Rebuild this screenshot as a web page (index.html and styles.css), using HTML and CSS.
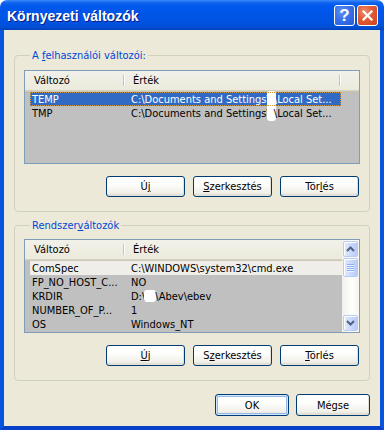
FILE: index.html
```html
<!DOCTYPE html>
<html lang="hu">
<head>
<meta charset="utf-8">
<title>Környezeti változók</title>
<link rel="stylesheet" href="styles.css">
</head>
<body>
<div class="window">
  <div class="titlebar">
    <span class="title">Környezeti változók</span>
    <div class="caption-btns">
      <span class="cbtn help">?</span>
      <span class="cbtn close"><svg width="11" height="11" viewBox="0 0 11 11"><path d="M1.5 1.5 L9.5 9.5 M9.5 1.5 L1.5 9.5" stroke="#fff" stroke-width="2.2" stroke-linecap="square"/></svg></span>
    </div>
  </div>
  <div class="frame">
    <div class="client">
      <fieldset class="group">
        <legend>A <u>f</u>elhasználói változói:</legend>
        <div class="list">
          <div class="header">
            <span class="hcol c1">Változó</span>
            <span class="hcol c2">Érték</span>
            <span class="hcol c3"></span>
          </div>
          <div class="rows">
            <div class="row sel"><span class="cell c1">TEMP</span><span class="cell c2">C:\Documents and Settings\<i class="redact"></i>\Local Set...</span></div>
            <div class="row"><span class="cell c1">TMP</span><span class="cell c2">C:\Documents and Settings\<i class="redact"></i>\Local Set...</span></div>
          </div>
        </div>
        <div class="btnrow">
          <button class="btn">Ú<u>j</u></button>
          <button class="btn"><u>S</u>zerkesztés</button>
          <button class="btn">Tör<u>l</u>és</button>
        </div>
      </fieldset>

      <fieldset class="group group2">
        <legend>Rendszer<u>v</u>áltozók</legend>
        <div class="list list-scroll">
          <div class="list-main">
            <div class="header">
              <span class="hcol c1">Változó</span>
              <span class="hcol c2">Érték</span>
            </div>
            <div class="rows">
              <div class="row inact"><span class="cell c1">ComSpec</span><span class="cell c2">C:\WINDOWS\system32\cmd.exe</span></div>
              <div class="row"><span class="cell c1">FP_NO_HOST_C...</span><span class="cell c2">NO</span></div>
              <div class="row"><span class="cell c1">KRDIR</span><span class="cell c2">D:\<i class="redact small"></i>\Abev\ebev</span></div>
              <div class="row"><span class="cell c1">NUMBER_OF_P...</span><span class="cell c2">1</span></div>
              <div class="row"><span class="cell c1">OS</span><span class="cell c2">Windows_NT</span></div>
            </div>
          </div>
          <div class="vscroll">
            <span class="sbtn"><svg width="9" height="6" viewBox="0 0 9 6"><path d="M1 5 L4.5 1.5 L8 5" fill="none" stroke="#4D6185" stroke-width="2"/></svg></span>
            <span class="thumb"><i></i><i></i><i></i><i></i></span>
            <span class="track"></span>
            <span class="sbtn"><svg width="9" height="6" viewBox="0 0 9 6"><path d="M1 1 L4.5 4.5 L8 1" fill="none" stroke="#4D6185" stroke-width="2"/></svg></span>
          </div>
        </div>
        <div class="btnrow">
          <button class="btn"><u>Ú</u>j</button>
          <button class="btn">S<u>z</u>erkesztés</button>
          <button class="btn"><u>T</u>örlés</button>
        </div>
      </fieldset>

      <div class="dlgbtns">
        <button class="btn default">OK</button>
        <button class="btn">Mégse</button>
      </div>
    </div>
  </div>
</div>
</body>
</html>
```

FILE: styles.css
```css
* { box-sizing: border-box; }

html, body {
  margin: 0;
  padding: 0;
  background: #ffffff;
}

body {
  width: 384px;
  height: 430px;
  overflow: hidden;
  font-family: "DejaVu Sans Condensed", "DejaVu Sans", sans-serif;
  font-size: 11px;
  color: #000;
}

.window {
  width: 384px;
  height: 430px;
  display: flex;
  flex-direction: column;
}

.titlebar {
  height: 30px;
  flex: none;
  display: flex;
  align-items: center;
  justify-content: space-between;
  padding: 0 6px 0 7px;
  border-radius: 7px 7px 0 0;
  background: linear-gradient(to bottom,
    #3C8CF8 0px, #2A7BF5 1px, #0F62EC 3px, #0058EE 6px,
    #0055E8 14px, #0053E1 22px, #0050D8 26px, #0047C8 29px, #003DB0 30px);
}

.title {
  font-family: "Liberation Sans", Arial, sans-serif;
  font-weight: bold;
  font-size: 14px;
  color: #fff;
  text-shadow: 1px 1px 0 #0A1883;
  padding-top: 1px;
}

.caption-btns {
  display: flex;
  gap: 2px;
  padding-top: 1px;
}

.cbtn {
  width: 21px;
  height: 21px;
  border: 1px solid #fff;
  border-radius: 3px;
  display: flex;
  align-items: center;
  justify-content: center;
  color: #fff;
}

.help {
  background: radial-gradient(circle at 35% 30%, #5E8FF5 0%, #3A70E8 45%, #2158D8 100%);
  font-family: "Liberation Sans", Arial, sans-serif;
  font-weight: bold;
  font-size: 17px;
  line-height: 1;
}

.close {
  background: radial-gradient(circle at 35% 30%, #EC8E6E 0%, #E05A34 45%, #C9431F 100%);
}

.frame {
  flex: 1;
  display: flex;
  border-left: 4px solid #0855DD;
  border-right: 4px solid #0855DD;
  border-bottom: 4px solid #0841C9;
  box-shadow: inset 1px 0 0 #166AEE, inset -1px 0 0 #166AEE;
}

.client {
  flex: 1;
  background: #ECE9D8;
  padding: 19px 10px 0 10px;
  display: flex;
  flex-direction: column;
}

.group {
  margin: 0;
  padding: 8px 9px 14px 9px;
  border: 1px solid #D0D0BF;
  border-radius: 4px;
  min-width: 0;
}

.group legend {
  color: #0046D5;
  padding: 0 2px;
  margin-left: 6px;
  line-height: 13px;
  height: 13px;
}

.group2 {
  margin-top: 7px;
  padding-top: 7px;
}

u { text-decoration: underline; text-underline-offset: 1px; }

.list {
  height: 94px;
  border: 1px solid #7F9DB9;
  background: #C0C0C0;
  overflow: hidden;
}

.list-scroll {
  display: flex;
}

.list-main {
  flex: 1;
  min-width: 0;
}

.header {
  display: flex;
  height: 20px;
  background: linear-gradient(to bottom, #F2F1EA 0%, #EBEADB 100%);
  border-bottom: 1px solid #D6D2C2;
  box-shadow: 0 1px 0 #CBC7B8, 0 2px 0 #C1BDAE;
}

.hcol {
  display: flex;
  align-items: center;
  position: relative;
  padding-left: 9px;
  white-space: nowrap;
}

.hcol.c1 { width: 99px; }
.hcol.c2 { width: 216px; }
.hcol.c3 { flex: 1; }

.hcol.c1::after,
.hcol.c2::after {
  content: "";
  position: absolute;
  right: 0;
  top: 4px;
  bottom: 4px;
  width: 1px;
  background: #C7C5B2;
  box-shadow: 1px 0 0 #FFFFFF;
}

.list-scroll .hcol.c2 { flex: 1; }
.list-scroll .hcol.c2::after { display: none; }

.rows {
  padding-top: 1px;
  padding-left: 5px;
}

.row {
  display: flex;
  height: 14px;
  align-items: center;
  white-space: nowrap;
  width: 311px;
}

.cell.c1 { width: 94px; padding-left: 2px; }
.cell.c2 { padding-left: 7px; display: flex; align-items: center; }

.row.sel {
  background: #316AC5;
  color: #fff;
  outline: 1px dotted #CE953A;
  outline-offset: -1px;
}

.row.inact {
  background: #EFEEE8;
}

.list-scroll .row { width: auto; }

.redact {
  display: inline-block;
  width: 9px;
  height: 16px;
  background: #fff;
  border-radius: 3px;
  margin: 0 -2px 0 -3px;
}

.redact.small {
  width: 12px;
  height: 12px;
  margin: 0 -1px;
}

.vscroll {
  width: 17px;
  flex: none;
  display: flex;
  flex-direction: column;
  background: linear-gradient(to right, #F3F1EC 0%, #FEFEFB 60%, #F6F5F0 100%);
  padding: 1px 0 1px 0;
}

.sbtn, .thumb {
  flex: none;
  height: 16px;
  margin: 0 1px 0 1px;
  border: 1px solid #B8CBF5;
  border-radius: 2px;
  background: linear-gradient(to right, #E3EBFD 0%, #CCDAFB 50%, #B9CBF7 100%);
  box-shadow: inset 1px 1px 0 #FFFFFF;
  display: flex;
  align-items: center;
  justify-content: center;
}

.thumb {
  height: 19px;
  margin-top: 1px;
  flex-direction: column;
  gap: 1px;
}

.thumb i {
  display: block;
  width: 7px;
  height: 1px;
  background: #8CB0F8;
  box-shadow: 0 1px 0 #EEF4FE;
}

.track { flex: 1; }

.btnrow {
  display: flex;
  justify-content: flex-end;
  gap: 8px;
  margin-top: 12px;
  padding-right: 1px;
}

.btn {
  width: 79px;
  height: 21px;
  padding: 0;
  font: inherit;
  color: #000;
  border: 1px solid #003C74;
  border-radius: 3px;
  background: linear-gradient(to bottom, #FFFFFF 0%, #FDFDFB 40%, #F0EFE8 85%, #D6D0C5 100%);
  box-shadow: inset -1px -1px 0 #E3E1D6;
}

.btn.default {
  box-shadow: inset 0 0 0 1px #CEE7FF, inset 0 0 0 2px #98B8EA;
}

.dlgbtns {
  display: flex;
  justify-content: flex-end;
  gap: 7px;
  margin-top: 13px;
}

.dlgbtns .btn { width: 74px; height: 22px; }
```
